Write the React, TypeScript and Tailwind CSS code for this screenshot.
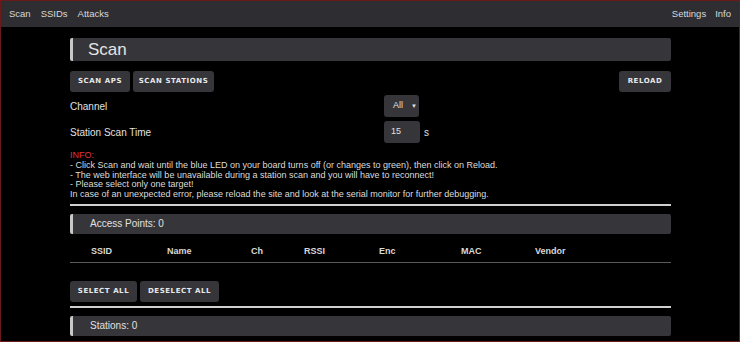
import React from "react";

const btn =
  "h-[21px] rounded-[3px] bg-[#36363a] text-[#e8e8e8] text-[7px] font-bold tracking-[0.08em] font-['DejaVu_Sans',sans-serif] uppercase flex items-center justify-center";

export default function App() {
  return (
    <div className="w-[740px] h-[342px] bg-black border border-[#6b1a1a] overflow-hidden font-['Liberation_Sans',Arial,sans-serif] text-[#e0e0e0]">
      <nav className="h-[26px] bg-[#2e2e32] flex items-center justify-between pl-[8px] pr-[8px] text-[9.5px] text-[#d8d8d8]">
        <div className="flex gap-[10px]">
          <span>Scan</span>
          <span>SSIDs</span>
          <span>Attacks</span>
        </div>
        <div className="flex gap-[9px]">
          <span>Settings</span>
          <span>Info</span>
        </div>
      </nav>
      <div className="w-[601px] ml-[69px] pt-[11px]">
        <div className="h-[23px] bg-[#36363a] border-l-[3px] border-[#c8c8c8] rounded-[2px] flex items-center pl-[15px] text-[17px] text-[#e4e4e4]">
          Scan
        </div>
        <div className="flex justify-between mt-[10px]">
          <div className="flex gap-[3px]">
            <div className={btn + " w-[60px]"}>Scan APs</div>
            <div className={btn + " w-[81px]"}>Scan Stations</div>
          </div>
          <div className={btn + " w-[52px]"}>Reload</div>
        </div>
        <div className="flex items-center h-[22px] mt-[3px] text-[10px]">
          <span className="w-[314px]">Channel</span>
          <div className="w-[35px] h-[22px] bg-[#36363a] rounded-[3px] flex items-center pl-[9px] gap-[8px] text-[9px]">
            <span>All</span>
            <span className="text-[6px]">▼</span>
          </div>
        </div>
        <div className="flex items-center h-[22px] mt-[4px] text-[10px]">
          <span className="w-[314px]">Station Scan Time</span>
          <div className="w-[36px] h-[22px] bg-[#36363a] rounded-[3px] flex items-center pl-[7px] text-[9px]">15</div>
          <span className="ml-[4px]">s</span>
        </div>
        <div className="mt-[8px] text-[9px] leading-[9.8px] text-[#dcdcdc]">
          <div className="text-[#e0303a]">INFO:</div>
          <div>- Click Scan and wait until the blue LED on your board turns off (or changes to green), then click on Reload.</div>
          <div>- The web interface will be unavailable during a station scan and you will have to reconnect!</div>
          <div>- Please select only one target!</div>
          <div>In case of an unexpected error, please reload the site and look at the serial monitor for further debugging.</div>
        </div>
        <div className="h-[2px] bg-[#cfcfcf] mt-[4px]" />
        <div className="h-[20px] mt-[8px] bg-[#36363a] border-l-[3px] border-[#c8c8c8] rounded-[2px] flex items-center pl-[17px] text-[10px]">
          Access Points: 0
        </div>
        <div className="flex items-center h-[20px] mt-[8px] text-[9px] font-bold text-[#d8d8d8] relative">
          <span className="absolute left-[21px]">SSID</span>
          <span className="absolute left-[97px]">Name</span>
          <span className="absolute left-[181px]">Ch</span>
          <span className="absolute left-[234px]">RSSI</span>
          <span className="absolute left-[309px]">Enc</span>
          <span className="absolute left-[391px]">MAC</span>
          <span className="absolute left-[465px]">Vendor</span>
        </div>
        <div className="h-px bg-[#5a5a5a]" />
        <div className="flex gap-[3px] mt-[18px]">
          <div className={btn + " w-[67px]"}>Select All</div>
          <div className={btn + " w-[79px]"}>Deselect All</div>
        </div>
        <div className="h-[2px] bg-[#cfcfcf] mt-[4px]" />
        <div className="h-[20px] mt-[8px] bg-[#36363a] border-l-[3px] border-[#c8c8c8] rounded-[2px] flex items-center pl-[17px] text-[10px]">
          Stations: 0
        </div>
      </div>
    </div>
  );
}
